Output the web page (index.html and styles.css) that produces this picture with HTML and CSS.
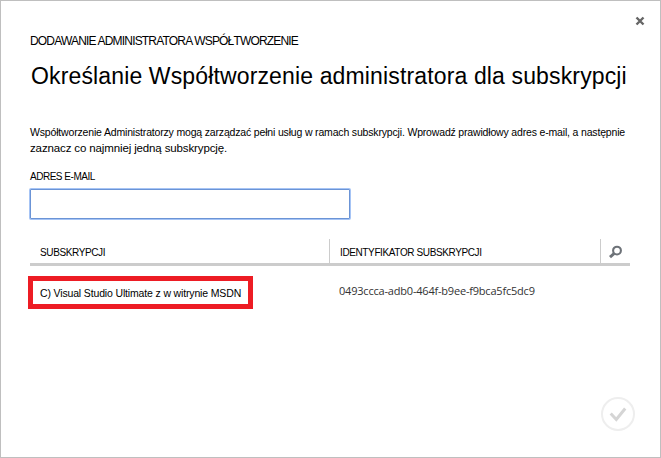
FILE: index.html
```html
<!DOCTYPE html>
<html lang="pl">
<head>
<meta charset="utf-8">
<title>Dodawanie administratora</title>
<link rel="stylesheet" href="styles.css">
</head>
<body>
<main class="dialog">
  <button class="close" aria-label="Zamknij"><svg width="10" height="10" viewBox="0 0 10 10"><path d="M1.5 1.5l7 7M8.5 1.5l-7 7"/></svg></button>
  <div class="eyebrow"><span>DODAWANIE ADMINISTRATORA WSPÓŁTWORZENIE</span></div>
  <h1><span>Określanie Współtworzenie administratora dla subskrypcji</span></h1>
  <p class="intro"><span class="line-one">Współtworzenie Administratorzy mogą zarządzać pełni usług w ramach subskrypcji. Wprowadź prawidłowy adres e-mail, a następnie</span><br><span class="line-two">zaznacz co najmniej jedną subskrypcję.</span></p>
  <label for="email"><span>ADRES E-MAIL</span></label>
  <input id="email" type="text">
  <div class="head">
    <div class="cell name"><span class="th-name">SUBSKRYPCJI</span></div>
    <div class="cell ident"><span class="th-ident">IDENTYFIKATOR SUBSKRYPCJI</span></div>
    <div class="search"><svg width="14" height="14" viewBox="0 0 14 14"><circle cx="8" cy="5.6" r="3.9"/><path class="handle" d="M5.2 8.4L1 12.2"/></svg></div>
  </div>
  <div class="row">
    <div class="selected"><span>C) Visual Studio Ultimate z w witrynie MSDN</span></div>
    <div class="guid"><span>0493ccca-adb0-464f-b9ee-f9bca5fc5dc9</span></div>
  </div>
  <button class="confirm" aria-label="OK"><svg width="34" height="34" viewBox="0 0 34 34"><circle cx="17" cy="17" r="16"/><path d="M9.7 16.5l5.6 6L24.2 11.5"/></svg></button>
</main>
</body>
</html>
```
FILE: styles.css
```css
* { box-sizing: border-box; }
body { margin: 0; background: #fff; color: #000; font-family: "Liberation Sans", sans-serif; }
button { padding: 0; border: 0; background: none; }
svg { display: block; fill: none; }
.dialog { position: relative; width: 661px; height: 458px; padding: 32px 30px 0 29px; border: 1px solid #bfbfbf; white-space: nowrap; }
.close { position: absolute; top: 15px; right: 15px; }
.close path { stroke: #666; stroke-width: 2.4; }
.eyebrow { height: 16px; font-size: 12px; line-height: 16px; letter-spacing: -0.82px; }
h1 { margin: 11px 0 0 1px; height: 32px; font-size: 23px; line-height: 32px; font-weight: 400; letter-spacing: 0.14px; }
.intro { margin: 32px 0 0; height: 32px; font-size: 10.5px; line-height: 16px; }
.line-one { letter-spacing: -0.17px; }
.line-two { font-size: 11.5px; letter-spacing: -0.13px; }
label { display: block; margin-top: 13px; height: 16px; font-size: 10px; line-height: 16px; letter-spacing: -0.48px; }
input { display: block; margin-top: 4px; width: 320px; height: 30px; border: 1px solid #6b94d6; border-radius: 1px; outline: 0; box-shadow: 0 0 0 1px #a6c4f5; }
.head { display: flex; width: 600px; height: 27px; margin-top: 20px; border-bottom: 3px solid #ccc; font-size: 10px; line-height: 16px; letter-spacing: -0.38px; }
.cell { padding: 6px 0 0 10px; }
.name { width: 299px; }
.ident { width: 271px; border-left: 1px solid #ccc; }
.search { flex: 1; padding: 6px 0 0 8px; border-left: 1px solid #ccc; }
.search svg { stroke: #6d7278; stroke-width: 2.1; }
.search .handle { stroke-width: 2.9; }
.row { display: flex; align-items: flex-start; margin: 10px 0 0 -2px; }
.selected { width: 225px; height: 33px; border: 5px solid #ed1c24; padding: 4px 0 0 7px; font-size: 10.5px; line-height: 16px; letter-spacing: -0.15px; }
.guid { margin: 7px 0 0 86px; font: 11px/16px "Open Sans", sans-serif; color: #333; letter-spacing: -0.2px; }
.confirm { position: absolute; right: 25px; bottom: 26px; }
.confirm circle { stroke: #eee; stroke-width: 2; }
.confirm path { stroke: #d5d5d5; stroke-width: 3; }
```
